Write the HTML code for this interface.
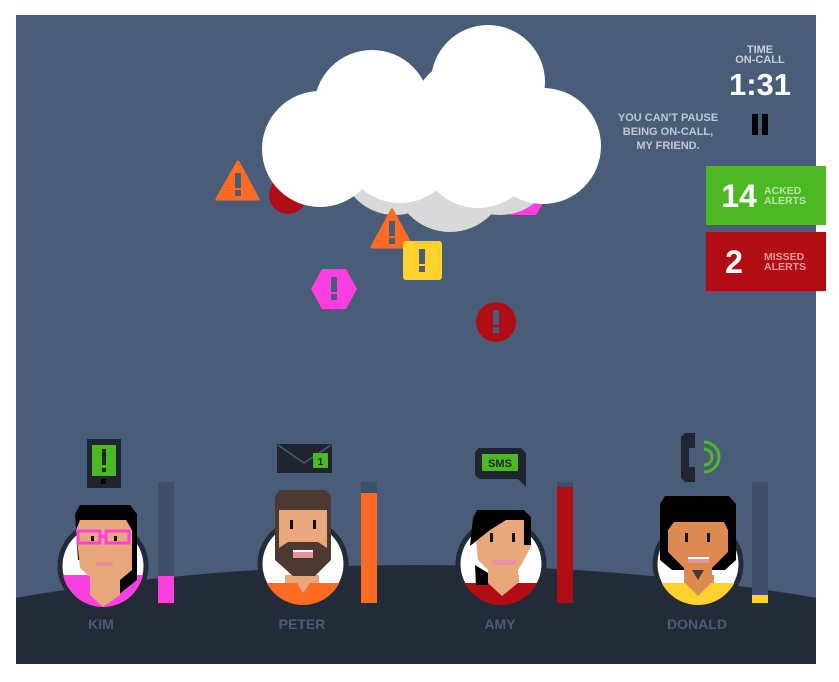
<!DOCTYPE html>
<html style="overflow:hidden"><head><meta charset="utf-8"><style>
html,body{margin:0;background:#fff;width:839px;height:682px;overflow:hidden;font-family:"Liberation Sans",sans-serif}
svg{display:block}
text{font-family:"Liberation Sans",sans-serif;font-weight:bold}
</style></head><body>
<svg width="839" height="682" viewBox="0 0 839 682">
<defs>
<clipPath id="panel"><rect x="16" y="15" width="800" height="649"/></clipPath>
<clipPath id="c1"><circle cx="103" cy="566" r="41"/></clipPath>
<clipPath id="c2"><circle cx="303" cy="564" r="41"/></clipPath>
<clipPath id="c3"><circle cx="501" cy="564" r="41"/></clipPath>
<clipPath id="c4"><circle cx="698" cy="564" r="41"/></clipPath>
</defs>
<rect x="16" y="15" width="800" height="649" fill="#4a5d78"/>
<g clip-path="url(#panel)">
<ellipse cx="416" cy="880" rx="900" ry="315" fill="#232b38"/>
</g>
<circle cx="288" cy="195" r="19" fill="#b00e14"/>
<polygon points="510,186 536,186 545,200 536,215 510,215 501,200" fill="#fb3fe0"/>
<g fill="#d9d9d9"><circle cx="450" cy="175" r="57"/><circle cx="395" cy="160" r="55"/><circle cx="500" cy="160" r="55"/></g>
<g fill="#fff">
<circle cx="320" cy="149" r="58"/><circle cx="372" cy="108" r="58"/><circle cx="470" cy="115" r="58"/>
<circle cx="488" cy="82" r="57"/><circle cx="543" cy="146" r="58"/><circle cx="400" cy="145" r="58"/><circle cx="478" cy="150" r="58"/>
</g>
<polygon points="238,162 258,199 217,199" fill="#fd6a21" stroke="#fd6a21" stroke-linejoin="round" stroke-width="3"/>
<rect x="235" y="173" width="6" height="15" fill="#4a5d78"/><rect x="235" y="190" width="6" height="6" fill="#4a5d78"/>
<polygon points="392,210 412,247 372,247" fill="#fd6a21" stroke="#fd6a21" stroke-linejoin="round" stroke-width="3"/>
<rect x="389" y="221" width="6" height="15" fill="#4a5d78"/><rect x="389" y="238" width="6" height="6" fill="#4a5d78"/>
<rect x="403" y="241" width="39" height="39" rx="3" fill="#fed12c"/>
<rect x="419" y="249" width="6" height="15" fill="#4a5d78"/><rect x="419" y="266" width="6" height="6" fill="#4a5d78"/>
<polygon points="322,269 346,269 357,289 346,309 322,309 311,289" fill="#fb3fe0"/>
<rect x="331" y="277" width="6" height="15" fill="#4a5d78"/><rect x="331" y="294" width="6" height="6" fill="#4a5d78"/>
<circle cx="496" cy="322" r="20" fill="#b00e14"/>
<rect x="493" y="310" width="6" height="15" fill="#4a5d78"/><rect x="493" y="327" width="6" height="6" fill="#4a5d78"/>
<text x="760" y="53" font-size="11" fill="#c8d0dc" text-anchor="middle">TIME</text>
<text x="760" y="63" font-size="11" fill="#c8d0dc" text-anchor="middle">ON-CALL</text>
<text x="760" y="95" font-size="31" fill="#fff" text-anchor="middle">1:31</text>
<rect x="752" y="114" width="6" height="21" fill="#000"/><rect x="762" y="114" width="6" height="21" fill="#000"/>
<text x="668" y="121" font-size="11" fill="#c0c8d4" text-anchor="middle">YOU CAN'T PAUSE</text>
<text x="668" y="135" font-size="11" fill="#c0c8d4" text-anchor="middle">BEING ON-CALL,</text>
<text x="668" y="149" font-size="11" fill="#c0c8d4" text-anchor="middle">MY FRIEND.</text>
<rect x="706" y="166" width="120" height="59" fill="#4cb823"/>
<text x="739" y="207" font-size="32" fill="#fff" text-anchor="middle">14</text>
<text x="764" y="194" font-size="10.5" fill="#b9e6a4">ACKED</text><text x="764" y="204" font-size="10.5" fill="#b9e6a4">ALERTS</text>
<rect x="706" y="232" width="120" height="59" fill="#b00e14"/>
<text x="734" y="273" font-size="32" fill="#fff" text-anchor="middle">2</text>
<text x="764" y="260" font-size="10.5" fill="#e79a9c">MISSED</text><text x="764" y="270" font-size="10.5" fill="#e79a9c">ALERTS</text>
<rect x="158" y="482" width="16" height="121" fill="#3f4f68"/><rect x="158" y="576" width="16" height="27" fill="#fb3fe0"/>
<rect x="361" y="482" width="16" height="121" fill="#3f4f68"/><rect x="361" y="493" width="16" height="110" fill="#fd6a21"/>
<rect x="557" y="482" width="16" height="121" fill="#3f4f68"/><rect x="557" y="487" width="16" height="116" fill="#b00e14"/>
<rect x="752" y="482" width="16" height="121" fill="#3f4f68"/><rect x="752" y="595" width="16" height="8" fill="#fed12c"/>
<g fill="#fff" stroke="#232b38" stroke-width="5">
<circle cx="103" cy="566" r="43"/><circle cx="303" cy="564" r="43"/><circle cx="501" cy="564" r="43"/><circle cx="698" cy="564" r="43"/>
</g>
<g clip-path="url(#c1)"><rect x="50" y="575" width="110" height="50" fill="#fb3fe0"/></g>
<polygon points="80,505 130,505 137,514 137,580 118,595 118,560 78,560 75,514" fill="#000"/>
<polygon points="80,520 126,520 132,530 132,570 120,580 120,595 103,607 90,595 90,577 80,568 76,530" fill="#e8a87c"/>
<rect x="78" y="531" width="22" height="12" fill="none" stroke="#fb3fe0" stroke-width="3"/>
<rect x="106" y="531" width="23" height="12" fill="none" stroke="#fb3fe0" stroke-width="3"/>
<rect x="100" y="535" width="6" height="3" fill="#fb3fe0"/>
<rect x="91" y="536" width="3" height="5" fill="#111"/><rect x="114" y="536" width="3" height="5" fill="#111"/>
<rect x="96" y="562" width="17" height="4" fill="#e8939b"/>
<g clip-path="url(#c2)"><rect x="250" y="583" width="110" height="50" fill="#fd6a21"/><rect x="285" y="575" width="34" height="8" fill="#e8a87c"/></g>
<polygon points="280,490 326,490 331,496 331,560 315,576 293,576 275,560 275,496" fill="#4b3932"/>
<polygon points="279,510 327,510 327,548 318,542 288,542 279,548" fill="#e8a87c"/>
<polygon points="293,576 315,576 303,593" fill="#e8a87c"/>
<rect x="290" y="520" width="3" height="9" fill="#111"/><rect x="313" y="520" width="3" height="9" fill="#111"/>
<rect x="293" y="550" width="20" height="8" fill="#e8939b"/><rect x="293" y="550" width="20" height="2" fill="#fff"/>
<g clip-path="url(#c3)"><rect x="450" y="583" width="110" height="50" fill="#b00e14"/><rect x="485" y="575" width="34" height="8" fill="#e8a87c"/></g>
<polygon points="478,510 524,510 531,517 531,546 524,560 518,570 518,583 502,596 488,583 488,570 478,560 475,530" fill="#e8a87c"/>
<polygon points="477,510 524,510 531,517 531,545 524,545 524,520 506,520 490,530 470,546 473,518" fill="#000"/>
<polygon points="475,565 488,573 488,585 476,585" fill="#000"/>
<rect x="490" y="533" width="3" height="9" fill="#111"/><rect x="512" y="533" width="3" height="9" fill="#111"/>
<rect x="492" y="560" width="24" height="5" fill="#e8939b"/>
<g clip-path="url(#c4)"><rect x="650" y="583" width="110" height="50" fill="#fed12c"/><rect x="684" y="575" width="30" height="8" fill="#dd8a52"/></g>
<polygon points="665,496 729,496 736,504 736,560 725,570 672,570 660,560 660,504" fill="#000"/>
<polygon points="674,522 724,522 728,530 728,552 712,568 712,582 698,596 684,582 684,568 668,552 668,530" fill="#dd8a52"/>
<rect x="685" y="533" width="3" height="9" fill="#111"/><rect x="707" y="533" width="3" height="9" fill="#111"/>
<rect x="688" y="557" width="21" height="6" fill="#e8939b"/><rect x="688" y="557" width="21" height="2" fill="#fff"/>
<polygon points="692,570 704,570 698,580" fill="#4b3932"/>
<text x="101" y="629" font-size="14" fill="#4a5d78" text-anchor="middle">KIM</text>
<text x="302" y="629" font-size="14" fill="#4a5d78" text-anchor="middle">PETER</text>
<text x="500" y="629" font-size="14" fill="#4a5d78" text-anchor="middle">AMY</text>
<text x="697" y="629" font-size="14" fill="#4a5d78" text-anchor="middle">DONALD</text>
<rect x="87" y="439" width="34" height="49" fill="#1e2531"/>
<rect x="92" y="445" width="24" height="31" fill="#4cb823"/>
<rect x="102" y="449" width="4" height="16" fill="#1e2531"/><rect x="102" y="468" width="4" height="4" fill="#1e2531"/>
<rect x="101" y="479" width="5" height="5" fill="#000"/>
<rect x="277" y="444" width="55" height="29" fill="#1e2531"/>
<polyline points="278,445 304,463 331,445" fill="none" stroke="#4a5d78" stroke-width="1.5"/>
<rect x="313" y="453" width="15" height="15" fill="#4cb823"/>
<text x="320.5" y="465" font-size="10" fill="#1e2531" text-anchor="middle">1</text>
<polygon points="479,448 521,448 526,453 526,487 518,479 479,479 475,475 475,452" fill="#1e2531"/>
<rect x="482" y="454" width="36" height="17" fill="#4cb823"/>
<text x="500" y="467" font-size="11" fill="#1e2531" text-anchor="middle">SMS</text>
<polygon points="685,433 695,433 695,448 689,448 689,467 695,467 695,482 685,482 681,478 681,437" fill="#1e2531"/>
<path d="M704,449 A8,8 0 0 1 704,465" fill="none" stroke="#4cb823" stroke-width="3"/>
<path d="M704,442 A15,15 0 0 1 704,472" fill="none" stroke="#4cb823" stroke-width="3"/>
</svg>
</body></html>
